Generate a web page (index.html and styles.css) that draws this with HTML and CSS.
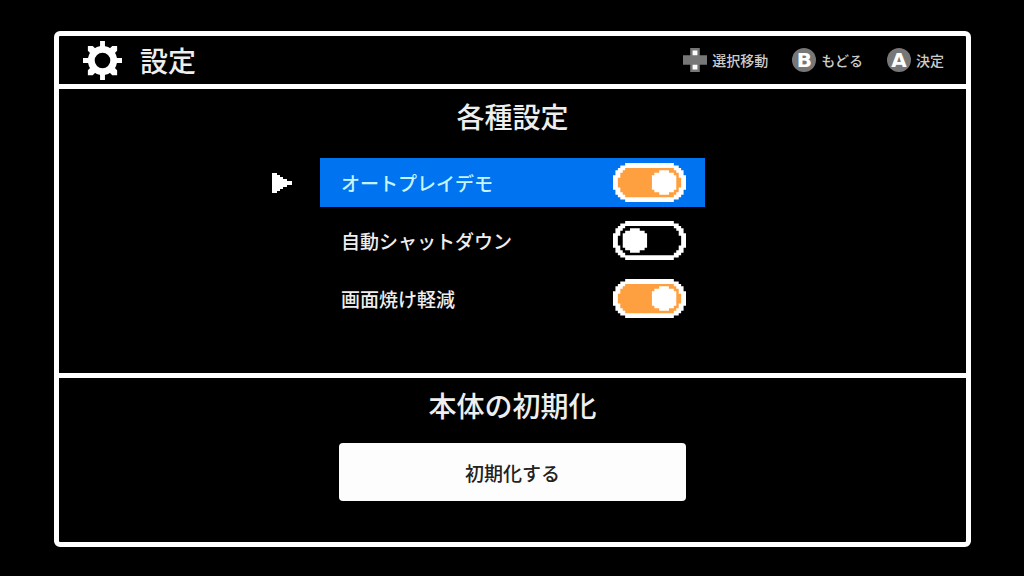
FILE: index.html
```html
<!DOCTYPE html>
<html lang="ja">
<head>
    <meta charset="UTF-8">
    <meta name="viewport" content="width=device-width, initial-scale=1.0">
    <title>設定</title>
    <link rel="stylesheet" href="styles.css">
</head>
<body>
    <main class="panel">
        <header class="header">
            <svg class="gear" viewBox="0 0 40 40" aria-hidden="true">
                <circle cx="20" cy="20" r="11.5" fill="none" stroke="#fff" stroke-width="7"/>
                <path d="M17.5 0h5v8h-5zM17.5 32h5v8h-5zM0 17.5h8v5h-8zM32 17.5h8v5h-8z"/>
                <path d="M5 5h5l4 4-5 5-4-4zM35 5h-5l-4 4 5 5 4-4zM5 35h5l4-4-5-5-4 4zM35 35h-5l-4-4 5-5 4 4z"/>
            </svg>
            <h1>設定</h1>
            <div class="hints">
                <div class="hint">
                    <svg class="dpad" viewBox="0 0 10 10" aria-hidden="true">
                        <path class="pad" d="M3 0h4v3h3v4h-3v3h-4v-3h-3v-4h3z"/>
                        <path class="mark" d="M4 1h2v2h-2zM4 7h2v2h-2z"/>
                    </svg>
                    <span>選択移動</span>
                </div>
                <div class="hint">
                    <span class="key">B</span>
                    <span>もどる</span>
                </div>
                <div class="hint">
                    <span class="key">A</span>
                    <span>決定</span>
                </div>
            </div>
        </header>

        <section class="section settings">
            <h2>各種設定</h2>
            <div class="rows">
                <div class="row selected">
                    <svg class="cursor" viewBox="0 0 20 20" aria-hidden="true">
                        <path d="M0 0h5v2h3v2h3v2h4v2h5v4h-5v2h-4v2h-3v2h-3v2h-5z"/>
                    </svg>
                    <label class="item" for="autoplay">
                        オートプレイデモ
                        <input type="checkbox" id="autoplay" class="toggle" checked>
                    </label>
                </div>
                <div class="row">
                    <label class="item" for="shutdown">
                        自動シャットダウン
                        <input type="checkbox" id="shutdown" class="toggle">
                    </label>
                </div>
                <div class="row">
                    <label class="item" for="burnin">
                        画面焼け軽減
                        <input type="checkbox" id="burnin" class="toggle" checked>
                    </label>
                </div>
            </div>
        </section>

        <section class="section reset">
            <h2>本体の初期化</h2>
            <button type="button" class="reset-button">初期化する</button>
        </section>
    </main>
</body>
</html>
```
FILE: styles.css
```css
* {
    box-sizing: border-box;
}
body {
    margin: 0;
    min-height: 100vh;
    padding: 31px 53px 29px 54px;
    display: flex;
    background-color: #000;
    color: #eee;
    font-family: "Noto Sans CJK JP", sans-serif;
    font-weight: 500;
}
h1, h2 {
    margin: 0;
    font-size: 28px;
    font-weight: 500;
    line-height: 40px;
}
.panel {
    flex: 1;
    display: flex;
    flex-direction: column;
    border: 5px solid #fff;
    border-radius: 6px;
}
.header {
    display: flex;
    align-items: center;
    min-height: 48px;
    padding: 0 22px 0 24px;
}
.gear {
    width: 39px;
    height: 39px;
    margin-right: 18px;
    fill: #fff;
}
.hints {
    display: flex;
    gap: 24px;
    margin-left: auto;
}
.hint {
    display: flex;
    align-items: center;
    gap: 5px;
    font-size: 14px;
    line-height: 24px;
    color: #ccc;
}
.dpad {
    width: 24px;
    height: 24px;
}
.pad {
    fill: #777;
}
.mark {
    fill: #fff;
}
.key {
    width: 24px;
    height: 24px;
    border-radius: 50%;
    background-color: #777;
    color: #fff;
    font-family: "DejaVu Sans", sans-serif;
    font-size: 20px;
    font-weight: bold;
    text-align: center;
}
.section {
    display: flex;
    flex-direction: column;
    align-items: center;
    padding: 7px 20px 40px;
    border-top: 5px solid #fff;
}
.settings {
    padding-bottom: 50px;
}
.reset {
    flex: 1;
}
.rows {
    width: 100%;
    margin-top: 22px;
    display: flex;
    flex-direction: column;
    gap: 9px;
}
.row {
    display: grid;
    grid-template-columns: 1fr minmax(0, 385px) 1fr;
    align-items: center;
}
.cursor {
    width: 20px;
    height: 20px;
    margin-right: 28px;
    justify-self: end;
    fill: #fff;
}
.item {
    grid-column: 2;
    display: flex;
    align-items: center;
    justify-content: space-between;
    height: 49px;
    padding: 0 19px 0 21px;
    font-size: 19px;
    cursor: pointer;
}
.selected .item {
    background-color: #0073f0;
    color: #c4f4ff;
}
.toggle {
    appearance: none;
    width: 73px;
    height: 39px;
    margin: 0;
    cursor: pointer;
    background: center / 100% 100% no-repeat url("data:image/svg+xml,%3Csvg xmlns='http://www.w3.org/2000/svg' viewBox='0 0 30 16' preserveAspectRatio='none'%3E%3Cpath fill='%23fff' d='M5 0h20v1h2v1h1v1h1v2h1v6h-1v2h-1v1h-1v1h-2v1h-20v-1h-2v-1h-1v-1h-1v-2h-1v-6h1v-2h1v-1h1v-1h2z'/%3E%3Cpath fill='%23000' d='M5 2h20v1h1v1h1v2h1v4h-1v2h-1v1h-1v1h-20v-1h-1v-1h-1v-2h-1v-4h1v-2h1v-1h1z'/%3E%3Cpath fill='%23fff' d='M7 3h4v1h2v1h1v6h-1v1h-2v1h-4v-1h-2v-1h-1v-6h1v-1h2z'/%3E%3C/svg%3E");
}
.toggle:checked {
    background-image: url("data:image/svg+xml,%3Csvg xmlns='http://www.w3.org/2000/svg' viewBox='0 0 30 16' preserveAspectRatio='none'%3E%3Cpath fill='%23fff' d='M5 0h20v1h2v1h1v1h1v2h1v6h-1v2h-1v1h-1v1h-2v1h-20v-1h-2v-1h-1v-1h-1v-2h-1v-6h1v-2h1v-1h1v-1h2z'/%3E%3Cpath fill='%23ffa040' d='M5 2h20v1h1v1h1v2h1v4h-1v2h-1v1h-1v1h-20v-1h-1v-1h-1v-2h-1v-4h1v-2h1v-1h1z'/%3E%3Cpath fill='%23fff' d='M19 3h4v1h2v1h1v6h-1v1h-2v1h-4v-1h-2v-1h-1v-6h1v-1h2z'/%3E%3C/svg%3E");
}
.reset-button {
    width: 100%;
    max-width: 347px;
    height: 58px;
    margin-top: 18px;
    border: none;
    border-radius: 4px;
    background-color: #fdfdfd;
    color: #222;
    font-family: inherit;
    font-size: 19px;
    font-weight: 500;
    cursor: pointer;
}
```
